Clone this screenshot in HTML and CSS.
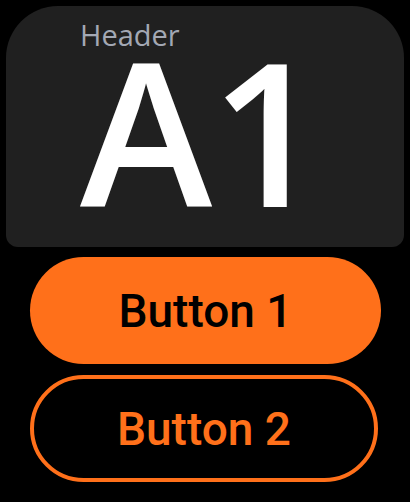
FILE: index.html
```html
<!DOCTYPE html>
<html lang="en">
<head>
<meta charset="utf-8">
<title>Tile</title>
<link rel="stylesheet" href="styles.css">
</head>
<body>
  <main class="screen">
    <section class="card">
      <div class="card-header">Header</div>
      <div class="card-value">A1</div>
    </section>
    <div class="actions">
      <button class="btn btn-filled">Button 1</button>
      <button class="btn btn-outline">Button 2</button>
    </div>
  </main>
</body>
</html>
```

FILE: styles.css
```css
html, body {
  margin: 0;
  padding: 0;
  background: #000;
}

.screen {
  width: 410px;
  height: 502px;
  display: flex;
  flex-direction: column;
  padding: 6px 6px 0 6px;
  box-sizing: border-box;
}

.card {
  height: 241px;
  background: #202020;
  border-radius: 52px 52px 12px 12px;
  display: flex;
  flex-direction: column;
  padding-left: 74px;
  box-sizing: border-box;
}

.card-header {
  font-family: "Open Sans", "Noto Sans", sans-serif;
  font-size: 29px;
  line-height: 34px;
  color: #a3a8b4;
  margin-top: 12px;
}

.card-value {
  font-family: "Open Sans", "Noto Sans", sans-serif;
  font-weight: 600;
  font-size: 200px;
  line-height: 156px;
  color: #fff;
  letter-spacing: -2px;
}

.actions {
  display: flex;
  flex-direction: column;
  gap: 11px;
  margin-top: 10px;
  padding-left: 24px;
}

.btn {
  font-family: Roboto, "Noto Sans", sans-serif;
  font-weight: 500;
  font-size: 46px;
  height: 107px;
  border-radius: 54px;
  box-sizing: border-box;
  display: flex;
  align-items: center;
  justify-content: center;
  padding: 0;
  cursor: pointer;
}

.btn-filled {
  width: 351px;
  background: #ff701a;
  color: #000;
  border: none;
}

.btn-outline {
  width: 348px;
  background: transparent;
  color: #ff701a;
  border: 4px solid #ff701a;
}
```
